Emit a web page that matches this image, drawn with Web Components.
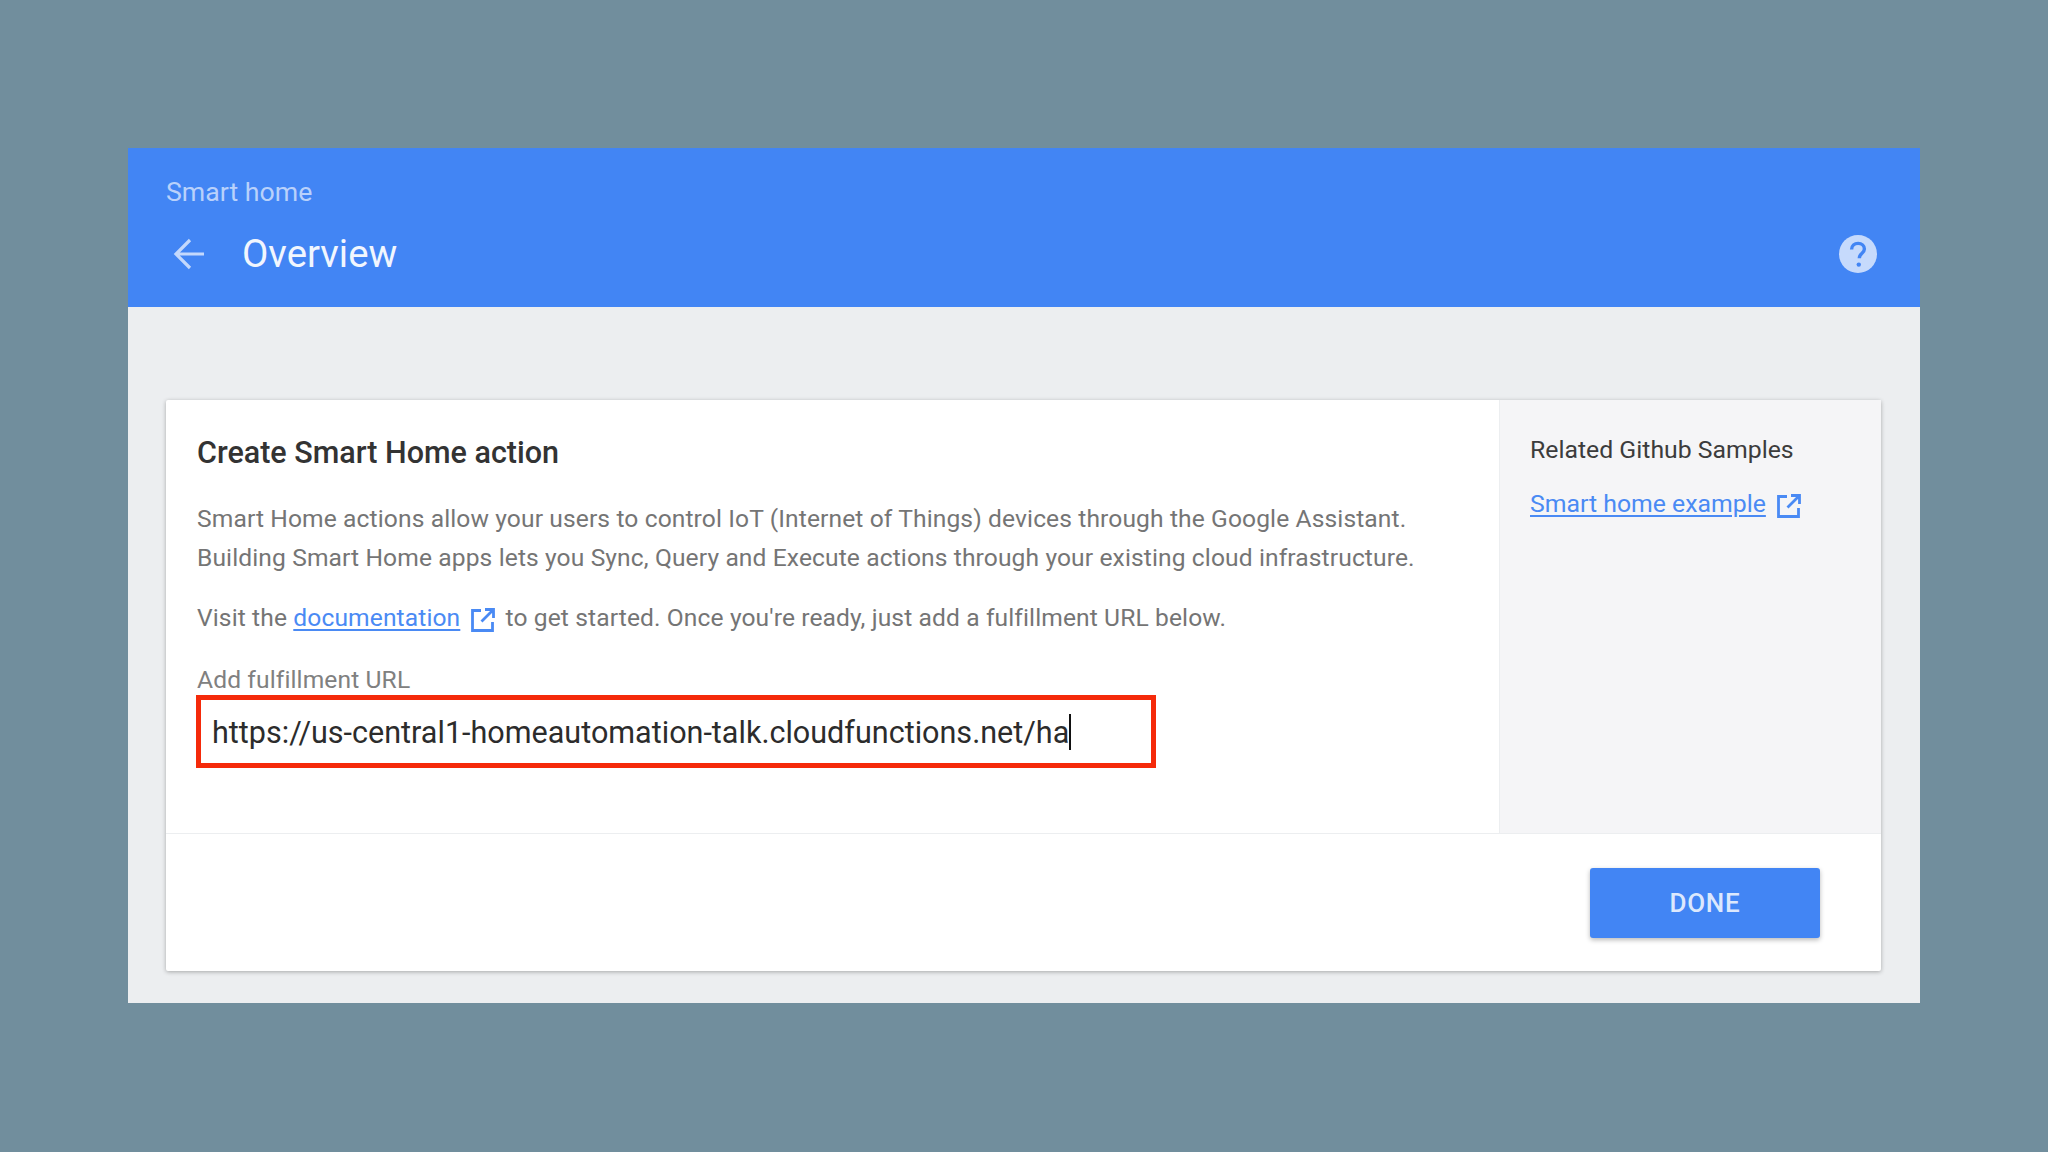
<!DOCTYPE html>
<html>
<head>
<meta charset="utf-8">
<title>Smart home</title>
<style>
    html, body { margin: 0; height: 100%; }
    body { background: #718e9d; font-family: Roboto, "Liberation Sans", sans-serif; }
</style>
</head>
<body>
<console-panel>
    <console-header slot="header" section="Smart home" heading="Overview"></console-header>
    <action-card>
        <span slot="title">Create Smart Home action</span>
        <span slot="intro">Smart Home actions allow your users to control IoT (Internet of Things) devices through the Google Assistant.<br>Building Smart Home apps lets you Sync, Query and Execute actions through your existing cloud infrastructure.</span>
        <span slot="visit">Visit the <ext-link>documentation</ext-link> to get started. Once you're ready, just add a fulfillment URL below.</span>
        <url-field slot="field" label="Add fulfillment URL" value="https://us-central1-homeautomation-talk.cloudfunctions.net/ha"></url-field>
        <span slot="side-title">Related Github Samples</span>
        <ext-link slot="side-link">Smart home example</ext-link>
        <done-button slot="action">DONE</done-button>
    </action-card>
</console-panel>

<script>
const panelTemplate = document.createElement('template');
panelTemplate.innerHTML = `
    <style>
        :host {
            display: block;
            box-sizing: border-box;
            padding: 148px 128px 149px;
            height: 100%;
        }
        .panel {
            background: #eceef0;
            height: 855px;
            display: flex;
            flex-direction: column;
        }
        .body {
            padding: 93px 39px 0 38px;
        }
    </style>
    <div class="panel">
        <slot name="header"></slot>
        <div class="body"><slot></slot></div>
    </div>
`;

class ConsolePanel extends HTMLElement {
    constructor () {
        super();
        this._shadowRoot = this.attachShadow({ mode: 'open' });
        this._shadowRoot.appendChild(panelTemplate.content.cloneNode(true));
    }
}

const headerTemplate = document.createElement('template');
headerTemplate.innerHTML = `
    <style>
        :host {
            display: block;
            box-sizing: border-box;
            height: 159px;
            background: #4285f4;
            padding: 26px 42px 0 38px;
        }
        .section {
            font-size: 26.7px;
            line-height: 36px;
            color: #b9d1fb;
        }
        .row {
            display: flex;
            align-items: center;
            margin-top: 19px;
            height: 50px;
        }
        .back {
            width: 44px;
            height: 44px;
            margin: 0 32px 0 0;
            flex: none;
        }
        .heading {
            font-size: 38.3px;
            line-height: 50px;
            color: #f1f6fe;
            flex: 1;
        }
        .help {
            width: 38px;
            height: 38px;
            flex: none;
            margin-right: 1px;
        }
    </style>
    <div class="section"></div>
    <div class="row">
        <svg class="back" viewBox="0 0 44 44" fill="none" stroke="#c3d8fc" stroke-width="3.2">
            <path d="M38 22H10M24 8L10 22l14 14"/>
        </svg>
        <div class="heading"></div>
        <svg class="help" viewBox="0 0 38 38">
            <circle cx="19" cy="19" r="19" fill="#c6dafc"/>
            <path d="M12.6 14.6c0-3.7 2.9-6.2 6.5-6.2s6.3 2.4 6.3 5.6c0 2.2-1.2 3.3-2.6 4.5-1.5 1.3-2.5 2.3-2.5 4.7" fill="none" stroke="#4285f4" stroke-width="3.4"/>
            <circle cx="19.8" cy="29.6" r="2.2" fill="#4285f4"/>
        </svg>
    </div>
`;

class ConsoleHeader extends HTMLElement {
    constructor () {
        super();
        this._shadowRoot = this.attachShadow({ mode: 'open' });
        this._shadowRoot.appendChild(headerTemplate.content.cloneNode(true));
        this._shadowRoot.querySelector('.section').textContent = this.getAttribute('section');
        this._shadowRoot.querySelector('.heading').textContent = this.getAttribute('heading');
    }
}

const cardTemplate = document.createElement('template');
cardTemplate.innerHTML = `
    <style>
        :host {
            display: block;
            background: #fff;
            border-radius: 2px;
            box-shadow: 0 1px 4px rgba(0, 0, 0, .3);
        }
        .top {
            display: flex;
            height: 433px;
            border-bottom: 1px solid #eceef0;
        }
        .main {
            flex: 1;
            box-sizing: border-box;
            padding: 31px 30px 0 31px;
            font-size: 24.6px;
            color: #757575;
            letter-spacing: .11px;
        }
        .title {
            font-size: 30.5px;
            font-weight: 500;
            line-height: 44px;
            color: #333;
            letter-spacing: 0;
        }
        .intro {
            margin-top: 25px;
            line-height: 38.5px;
        }
        .visit {
            margin-top: 22px;
            line-height: 38px;
        }
        .field {
            margin-top: 27px;
        }
        .side {
            width: 382px;
            flex: none;
            box-sizing: border-box;
            background: #f5f5f7;
            border-left: 1px solid #eceef0;
            padding: 31px 0 0 30px;
            font-size: 24.8px;
        }
        .side-title {
            color: #3c3c3c;
            line-height: 38px;
        }
        .side-link {
            margin-top: 16px;
            line-height: 38px;
        }
        .bottom {
            height: 137px;
            box-sizing: border-box;
            display: flex;
            justify-content: flex-end;
            padding: 34px 61px 0 0;
        }
    </style>
    <div class="top">
        <div class="main">
            <div class="title"><slot name="title"></slot></div>
            <div class="intro"><slot name="intro"></slot></div>
            <div class="visit"><slot name="visit"></slot></div>
            <div class="field"><slot name="field"></slot></div>
        </div>
        <div class="side">
            <div class="side-title"><slot name="side-title"></slot></div>
            <div class="side-link"><slot name="side-link"></slot></div>
        </div>
    </div>
    <div class="bottom"><slot name="action"></slot></div>
`;

class ActionCard extends HTMLElement {
    constructor () {
        super();
        this._shadowRoot = this.attachShadow({ mode: 'open' });
        this._shadowRoot.appendChild(cardTemplate.content.cloneNode(true));
    }
}

const linkTemplate = document.createElement('template');
linkTemplate.innerHTML = `
    <style>
        :host {
            display: inline;
            color: #4a8af4;
        }
        a {
            color: inherit;
            text-decoration: underline;
            text-underline-offset: 3px;
        }
        svg {
            width: 26px;
            height: 26px;
            margin: 0 3px 0 10px;
            vertical-align: -7px;
        }
    </style>
    <a href="#"><slot></slot></a><svg viewBox="0 0 26 26" fill="none" stroke="#4a8af4" stroke-width="2.8">
        <path d="M11 3.5H2.5v20h20V15M15 2.5h8.5V11M23 3L11.5 14.5"/>
    </svg>
`;

class ExtLink extends HTMLElement {
    constructor () {
        super();
        this._shadowRoot = this.attachShadow({ mode: 'open' });
        this._shadowRoot.appendChild(linkTemplate.content.cloneNode(true));
    }
}

const fieldTemplate = document.createElement('template');
fieldTemplate.innerHTML = `
    <style>
        :host {
            display: block;
        }
        label {
            display: block;
            font-size: 24.6px;
            line-height: 32px;
            color: #808080;
        }
        .box {
            box-sizing: border-box;
            width: 960px;
            height: 73px;
            margin-top: -1px;
            margin-left: -1px;
            border: 5px solid #f52a0a;
            padding: 1px 0 0 11px;
            display: flex;
            align-items: center;
            font-size: 30.55px;
            letter-spacing: 0;
            color: #2c2c2c;
        }
        .caret {
            width: 2px;
            height: 36px;
            background: #111;
            flex: none;
        }
    </style>
    <label></label>
    <div class="box"><span class="text"></span><span class="caret"></span></div>
`;

class UrlField extends HTMLElement {
    constructor () {
        super();
        this._shadowRoot = this.attachShadow({ mode: 'open' });
        this._shadowRoot.appendChild(fieldTemplate.content.cloneNode(true));
        this._shadowRoot.querySelector('label').textContent = this.getAttribute('label');
        this._shadowRoot.querySelector('.text').textContent = this.getAttribute('value');
    }
}

const buttonTemplate = document.createElement('template');
buttonTemplate.innerHTML = `
    <style>
        :host {
            display: flex;
            align-items: center;
            justify-content: center;
            width: 230px;
            height: 70px;
            background: #4285f4;
            color: #dce8fd;
            border-radius: 3px;
            font-size: 26px;
            font-weight: 500;
            letter-spacing: .8px;
            box-shadow: 0 2px 5px rgba(0, 0, 0, .28);
        }
    </style>
    <slot></slot>
`;

class DoneButton extends HTMLElement {
    constructor () {
        super();
        this._shadowRoot = this.attachShadow({ mode: 'open' });
        this._shadowRoot.appendChild(buttonTemplate.content.cloneNode(true));
    }
}

customElements.define('console-panel', ConsolePanel);
customElements.define('console-header', ConsoleHeader);
customElements.define('action-card', ActionCard);
customElements.define('ext-link', ExtLink);
customElements.define('url-field', UrlField);
customElements.define('done-button', DoneButton);
</script>
</body>
</html>
